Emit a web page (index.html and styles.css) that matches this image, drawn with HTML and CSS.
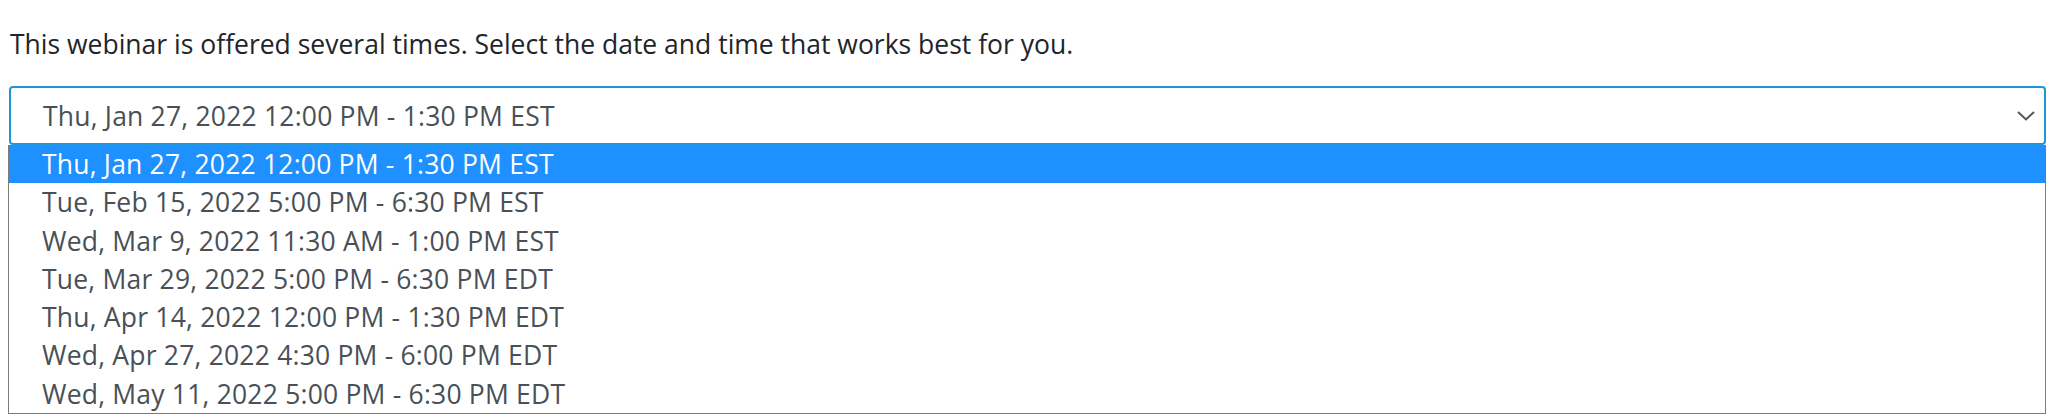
FILE: index.html
```html
<!DOCTYPE html>
<html lang="en">
<head>
<meta charset="utf-8">
<title>Webinar dates</title>
<link rel="stylesheet" href="styles.css">
</head>
<body>
<div class="page">
  <p class="intro">This webinar is offered several times. Select the date and time that works best for you.</p>
  <div class="picker">
    <div class="select">
      <span class="value">Thu, Jan 27, 2022 12:00 PM - 1:30 PM EST</span>
      <svg class="chevron" width="18" height="10" viewBox="0 0 18 10"><path d="M1 1 L9 8.5 L17 1" fill="none" stroke="#555" stroke-width="2"/></svg>
    </div>
    <ul class="options">
      <li class="option selected">Thu, Jan 27, 2022 12:00 PM - 1:30 PM EST</li>
      <li class="option">Tue, Feb 15, 2022 5:00 PM - 6:30 PM EST</li>
      <li class="option">Wed, Mar 9, 2022 11:30 AM - 1:00 PM EST</li>
      <li class="option">Tue, Mar 29, 2022 5:00 PM - 6:30 PM EDT</li>
      <li class="option">Thu, Apr 14, 2022 12:00 PM - 1:30 PM EDT</li>
      <li class="option">Wed, Apr 27, 2022 4:30 PM - 6:00 PM EDT</li>
      <li class="option">Wed, May 11, 2022 5:00 PM - 6:30 PM EDT</li>
    </ul>
  </div>
</div>
</body>
</html>
```
FILE: styles.css
```css
html, body {
  margin: 0;
  padding: 0;
  background: #fff;
}
.page {
  padding: 0 8px 0 8px;
  font-family: "Open Sans", "Noto Sans", sans-serif;
  font-size: 26.5px;
}
.intro {
  margin: 26px 0 0 2px;
  line-height: 36px;
  color: #212529;
}
.picker {
  margin-top: 24px;
  width: 2038px;
}
.select {
  box-sizing: border-box;
  height: 59px;
  margin-left: 1px;
  border: 2px solid #1e96dc;
  border-radius: 4px;
  display: flex;
  align-items: center;
  justify-content: space-between;
  padding: 1px 9px 0 32px;
  color: #495057;
}
.value {
  line-height: 36px;
  letter-spacing: 0.2px;
}
.chevron {
  display: block;
}
.options {
  list-style: none;
  margin: 0;
  padding: 0;
  border: 1px solid #7a7a7a;
  border-top: none;
  color: #495057;
}
.option {
  box-sizing: border-box;
  height: 38.3px;
  line-height: 37px;
  padding: 1px 0 0 33px;
  letter-spacing: 0.2px;
  white-space: nowrap;
}
.option.selected {
  background: #1e90ff;
  color: #fff;
}
```
